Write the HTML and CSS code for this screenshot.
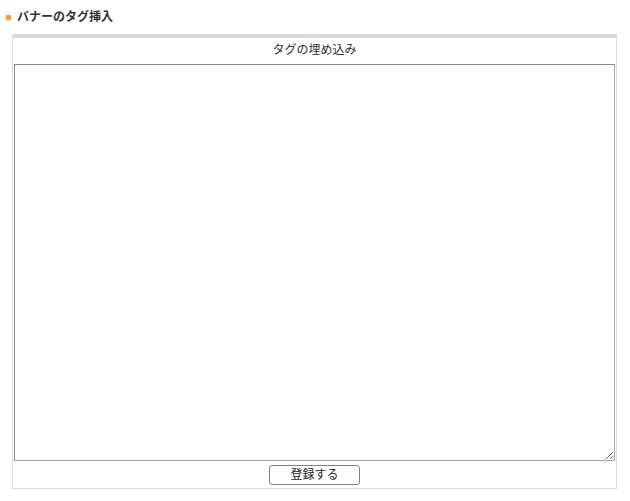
FILE: index.html
```html
<!DOCTYPE html>
<html lang="ja">
<head>
<meta charset="utf-8">
<title>バナーのタグ挿入</title>
<link rel="stylesheet" href="styles.css">
</head>
<body>
<h2 class="title"><span class="mark"></span>バナーのタグ挿入</h2>
<div class="box">
  <div class="head">タグの埋め込み</div>
  <textarea class="tag-input"></textarea>
  <div class="foot"><button class="btn" type="button">登録する</button></div>
</div>
</body>
</html>
```
FILE: styles.css
```css
html, body {
  margin: 0;
  padding: 0;
  background: #fff;
}
body {
  font-family: "Liberation Sans", "Noto Sans CJK JP", sans-serif;
  font-size: 12px;
  color: #333;
}
.title {
  margin: 0;
  padding: 6px 0 0 6px;
  height: 28px;
  box-sizing: border-box;
  font-size: 12px;
  line-height: 14px;
  font-weight: bold;
  color: #333;
  display: flex;
  align-items: center;
  align-self: flex-start;
}
.mark {
  width: 5px;
  height: 5px;
  background: #ff9a1a;
  margin-right: 6px;
}
.box {
  margin: 6px 0 0 12px;
  width: 605px;
  box-sizing: border-box;
  border-top: 4px solid #d9d9d9;
  border-left: 1px solid #dcdcdc;
  border-right: 1px solid #dcdcdc;
  border-bottom: 1px solid #dcdcdc;
  display: flex;
  flex-direction: column;
}
.head {
  height: 26px;
  line-height: 25px;
  text-align: center;
  color: #333;
}
.tag-input {
  display: block;
  margin: 0 1px;
  width: 601px;
  height: 397px;
  box-sizing: border-box;
  border: 1px solid #a4a4b4;
  border-top-color: #88889a;
  border-left-color: #88889a;
  padding: 2px;
  resize: both;
  font-family: inherit;
  font-size: 12px;
  outline: none;
}
.foot {
  height: 27px;
  display: flex;
  justify-content: center;
  align-items: center;
  padding-top: 1px;
  box-sizing: border-box;
}
.btn {
  width: 91px;
  height: 20px;
  padding: 0;
  background: #fff;
  border: 1px solid #808080;
  border-radius: 3px;
  font-family: inherit;
  font-size: 12px;
  color: #222;
  line-height: 18px;
}
```
